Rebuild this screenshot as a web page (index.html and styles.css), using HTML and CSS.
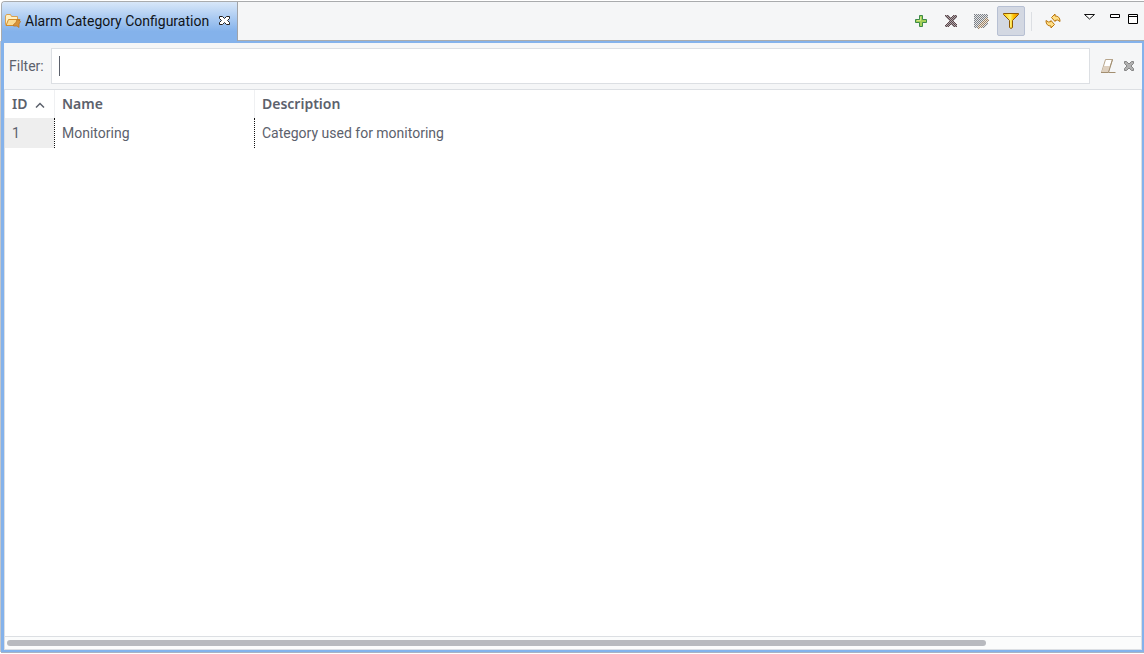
FILE: index.html
```
<!DOCTYPE html>
<html lang="en">
<head>
<meta charset="utf-8">
<meta name="viewport" content="width=device-width, initial-scale=1">
<title>Alarm Category Configuration</title>
<link rel="stylesheet" href="styles.css">
</head>
<body>
<main class="view">
  <header class="bar">
    <div class="tab">
      <svg class="tab-icon" width="17" height="16" viewBox="0 0 17 16" aria-hidden="true">
        <path d="M.5 11.500V3l1-1.500h4l1 2h6v8z" fill="#fff0c4" stroke="#d9a050"/>
        <path d="M1 12.500l2.500-6H15l-2.500 6z" fill="#fbdc94" stroke="#d08c2c"/>
        <path d="M8.500 11.500l2.500-2 1-3 2 .5 1.500 1.500-1.500 2.500v3.500l-2-1.500-3.500 0z" fill="#d8943a" stroke="#bd7626" stroke-width=".8"/>
      </svg>
      <h1 class="tab-title">Alarm Category Configuration</h1>
      <button class="icon-button tab-close" type="button" aria-label="Close">
        <svg width="11" height="11" viewBox="0 0 11 11"><path d="M.5 1.500h3l2 2 2-2h3v2l-2 2 2 2v2h-3l-2-2-2 2h-3v-2l2-2-2-2z" fill="#fff" stroke="#26221f"/></svg>
      </button>
    </div>
    <div class="tools">
      <button class="icon-button tool" type="button" aria-label="Create">
        <svg width="12" height="12" viewBox="0 0 12 12"><path d="M4.500.5h3v4h4v3h-4v4h-3v-4h-4v-3h4z" fill="#a5d058" stroke="#3d8b48"/><path d="M5.500 2v3.500H2" fill="none" stroke="#d2e889"/></svg>
      </button>
      <button class="icon-button tool" type="button" aria-label="Delete" disabled>
        <svg width="14" height="14" viewBox="0 0 14 14" shape-rendering="crispEdges">
          <defs><pattern id="dither-red" width="2" height="2" patternUnits="userSpaceOnUse"><path d="M0 0h2v2H0z" fill="#a9aaad"/><path d="M0 0h1v1H0zM1 1h1v1H1z" fill="#5f4247"/></pattern></defs>
          <path d="M1 1h4l2 3 2-3h4v2L9 7l4 4v2H9l-2-3-2 3H1v-2l4-4-4-4z" fill="url(#dither-red)"/>
        </svg>
      </button>
      <button class="icon-button tool" type="button" aria-label="Edit" disabled>
        <svg width="16" height="16" viewBox="0 0 16 16" shape-rendering="crispEdges">
          <defs><pattern id="dither-gray" width="2" height="2" patternUnits="userSpaceOnUse"><path d="M0 0h2v2H0z" fill="#e4e6e8"/><path d="M0 0h1v1H0zM1 1h1v1H1z" fill="#7c8086"/></pattern><pattern id="dither-tan" width="2" height="2" patternUnits="userSpaceOnUse"><path d="M0 0h2v2H0z" fill="#f0e7d8"/><path d="M0 0h1v1H0zM1 1h1v1H1z" fill="#98816a"/></pattern></defs>
          <path d="M1 1h14v10l-3 4H1z" fill="url(#dither-gray)"/>
          <path d="M5 16v-4l8-8 3 3-8 8z" fill="url(#dither-tan)"/>
        </svg>
      </button>
      <button class="icon-button tool pressed" type="button" aria-label="Show filter" aria-pressed="true">
        <svg width="16" height="16" viewBox="0 0 16 16">
          <defs><linearGradient id="funnel"><stop offset=".1" stop-color="#ffd21a"/><stop offset=".45" stop-color="#fff27a"/><stop offset=".65" stop-color="#ffc400"/><stop offset="1" stop-color="#e98600"/></linearGradient></defs>
          <path d="M.5.5h15v1l-6 6v7l-1.500 1-1.500-1v-7l-6-6z" fill="url(#funnel)" stroke="#8e5800"/>
        </svg>
      </button>
      <span class="separator"></span>
      <button class="icon-button tool" type="button" aria-label="Refresh">
        <svg width="16" height="16" viewBox="0 0 16 16"><g fill="#ffdf86" stroke="#b9740b" stroke-linejoin="round"><path d="M6.500 4.500L10 1v2c3 0 5 1.500 5 5.500L12.500 7 10 7.500v1z"/><path d="M9.500 11.500L6 15v-2c-3 0-5-1.500-5-5.500L3.500 9 6 8.500v-1z"/></g></svg>
      </button>
    </div>
    <div class="window-tools">
      <button class="icon-button menu" type="button" aria-label="View menu">
        <svg width="11" height="6" viewBox="0 0 11 6"><path d="M.5.5h10l-5 4.500z" fill="#fff" stroke="#111"/></svg>
      </button>
      <button class="icon-button" type="button" aria-label="Minimize">
        <svg width="10" height="5" viewBox="0 0 10 5"><path d="M.5.5h9v3h-9z" fill="#fff" stroke="#000"/></svg>
      </button>
      <button class="icon-button" type="button" aria-label="Maximize">
        <svg width="10" height="10" viewBox="0 0 10 10"><path d="M.5.5h9v9h-9zM0 2.500h10" fill="#fff" stroke="#000"/></svg>
      </button>
    </div>
  </header>
  <section class="content">
    <div class="filter">
      <label class="filter-label" for="filter">Filter:</label>
      <input class="filter-input" id="filter" type="text">
      <button class="icon-button erase" type="button" aria-label="Clear filter">
        <svg width="16" height="16" viewBox="0 0 16 16"><path d="M5.500 1.500h7L8 14.500H1.500z" fill="#fff" stroke="#b7a58c"/><path d="M4 8h6.500l-2.500 6H1.500z" fill="#ded0bf"/><path d="M1 14.500h7.500l4-13M9 14.500h6.500" fill="none" stroke="#a28e70"/></svg>
      </button>
      <button class="icon-button" type="button" aria-label="Close filter">
        <svg width="12" height="12" viewBox="0 0 12 12"><path d="M1.500 1.500h2l2.500 2.500 2.500-2.500h2v2L8 6l2.500 2.500v2h-2L6 8l-2.500 2.500h-2v-2L4 6 1.500 3.500z" fill="#b0b0b0" stroke="#858585"/></svg>
      </button>
    </div>
    <div class="list">
      <table class="table">
        <thead>
          <tr>
            <th class="id" scope="col" aria-sort="ascending">ID<svg class="sort" width="10" height="6" viewBox="0 0 10 6" aria-hidden="true"><path d="M1 5.500l4-4 4 4" fill="none" stroke="#5c616c" stroke-width="1.500"/></svg></th>
            <th class="name" scope="col">Name</th>
            <th scope="col">Description</th>
          </tr>
        </thead>
        <tbody>
          <tr><td>1</td><td>Monitoring</td><td>Category used for monitoring</td></tr>
        </tbody>
      </table>
      <div class="scrollbar"><div class="thumb"></div></div>
    </div>
  </section>
</main>
</body>
</html>
```
FILE: styles.css
```
* { box-sizing: border-box; }

body {
  margin: 0;
  background: #fff;
  color: #5c616c;
  font: 14px/20px Roboto, "Noto Sans", sans-serif;
}

.view {
  display: flex;
  flex-direction: column;
  height: 100vh;
  padding: 1px 0 2px 1px;
}

.bar {
  display: flex;
  flex: none;
  height: 40px;
  background: #f5f6f7;
  border: 1px solid #a9abad;
  border-right: 0;
  border-top-left-radius: 4px;
}

.tab {
  display: flex;
  align-items: center;
  height: 39px;
  padding: 0 7px 2px 3px;
  background: linear-gradient(#d8e7f9, #84b2eb 75%);
  border-right: 1px solid #a0a3a8;
  border-top-left-radius: 3px;
}

.tab-icon { flex: none; }

.tab-title {
  margin: 0 10px 0 3px;
  color: #101418;
  font-size: 14px;
  font-weight: 400;
  white-space: nowrap;
}

.icon-button {
  display: flex;
  flex: none;
  align-items: center;
  justify-content: center;
  padding: 0;
  background: none;
  border: 0;
}

.tools {
  display: flex;
  align-items: center;
  gap: 2px;
  margin-left: auto;
}

.tool {
  width: 28px;
  height: 30px;
  border-radius: 2px;
}

.pressed {
  background: #d3d8e2;
  border: 1px solid #b7c0d3;
}

.separator {
  width: 1px;
  height: 19px;
  margin: 0 5px 0 4px;
  background: #dcdfe3;
}

.window-tools {
  display: flex;
  align-items: flex-start;
  gap: 8px;
  padding: 12px 6px 0 17px;
}

.menu { margin-right: 7px; }

.content {
  display: flex;
  flex: 1;
  flex-direction: column;
  min-height: 0;
  background: #f5f6f7;
  border: 2px solid #84b2eb;
  border-left-width: 3px;
  box-shadow: -1px 0 #c3c6cb, 0 1px #a9b3c4;
}

.filter {
  display: flex;
  align-items: center;
  height: 46px;
  padding: 0 7px 0 5px;
}

.filter-label { width: 42px; }

.filter-input {
  flex: 1;
  min-width: 0;
  height: 36px;
  padding: 0 8px;
  background: linear-gradient(#5c616c, #5c616c) 7px 50% / 1px 20px no-repeat #fff;
  border: 1px solid #dcdfe3;
  color: inherit;
  font: inherit;
}

.erase { margin: 0 7px 0 10px; }

.list {
  display: flex;
  flex: 1;
  flex-direction: column;
  justify-content: space-between;
  min-height: 0;
  background: #fff;
  border: 1px solid #dcdfe3;
}

.table {
  width: 100%;
  border-collapse: separate;
  border-spacing: 0;
  table-layout: fixed;
}

.table th,
.table td {
  padding: 0 7px;
  text-align: left;
  white-space: nowrap;
}

.table th {
  height: 28px;
  border-right: 1px solid #eff0f2;
  font-family: "Noto Sans", sans-serif;
  font-weight: 600;
}

.table td {
  height: 30px;
  border-right: 1px dotted #111;
}

.table th:last-child,
.table td:last-child { border-right: 0; }

.table td:first-child { background: #eee; background-clip: padding-box; }

.id { width: 50px; }
.name { width: 200px; }

.sort {
  margin-left: 8px;
  vertical-align: 1px;
}

.scrollbar {
  height: 13px;
  padding: 3px 2px;
  background: #fbfcfc;
  border-top: 1px solid #dcdfe3;
}

.thumb {
  width: 86.5%;
  height: 6px;
  background: #b8babf;
  border-radius: 3px;
}
```
